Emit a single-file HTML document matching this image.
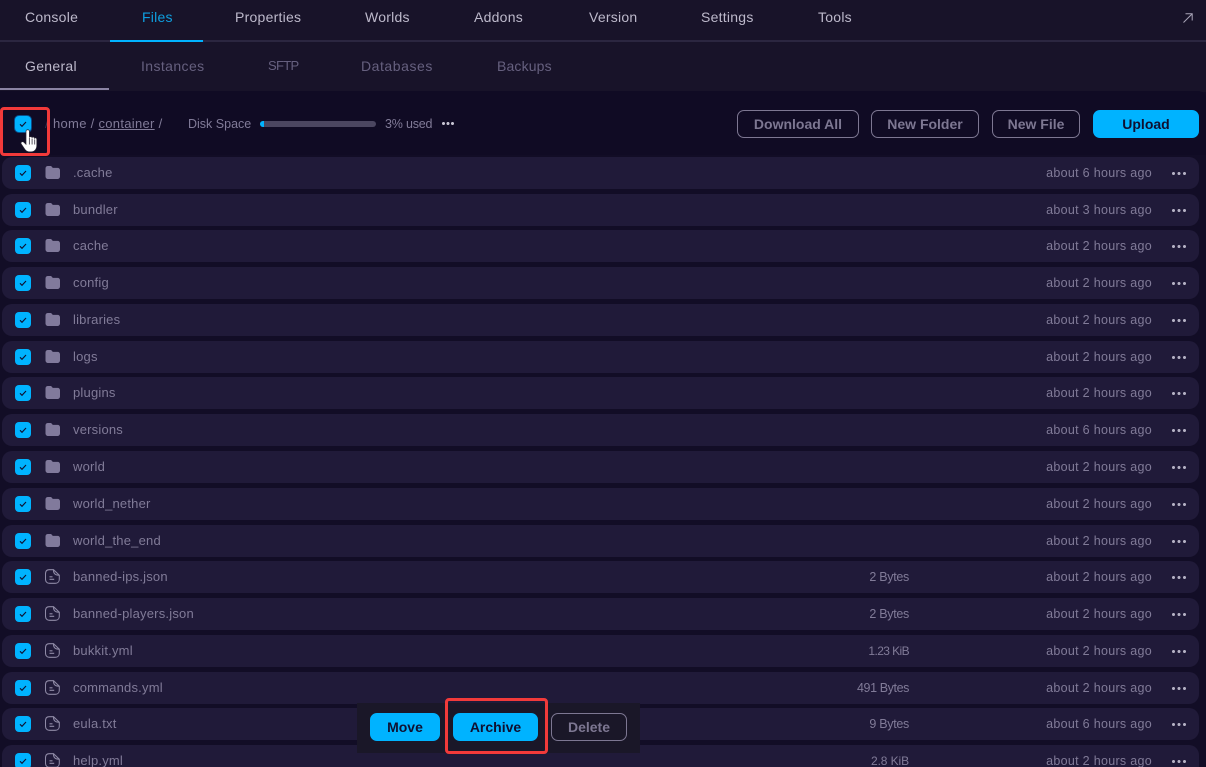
<!DOCTYPE html>
<html><head><meta charset="utf-8"><style>
*{box-sizing:border-box;margin:0;padding:0}
html,body{width:1206px;height:767px;overflow:hidden;background:#120d26}
body{position:relative;font-family:"Liberation Sans",sans-serif;font-size:12px}
.a{position:absolute;white-space:nowrap}
.t{top:0;line-height:35px;font-size:14px;letter-spacing:.25px;color:#bdb9cb}
.s{top:48px;line-height:36px;font-size:14px;letter-spacing:.35px;color:#66607f}
.r{position:absolute;left:2px;width:1197px;height:32px;background:#201a39;border-radius:10px}
.c{position:absolute;left:13px;top:8px;width:16px;height:16px;background:#00b3ff;border-radius:4px}
.c svg{display:block}
.i{position:absolute;left:42.500px;top:8px}
.n{position:absolute;left:71px;top:0;line-height:32px;font-size:13px;letter-spacing:.2px;color:#817b98;white-space:nowrap}
.z{position:absolute;right:290px;top:0;line-height:32px;font-size:12.500px;letter-spacing:-.3px;color:#817b98}
.d{position:absolute;right:47px;top:0;line-height:32px;font-size:12.500px;letter-spacing:.3px;color:#817b98}
.m{position:absolute;left:1170px;top:14.500px;width:14px;height:3px;background:radial-gradient(circle at 1.500px 1.500px,#b5b1c4 1.400px,transparent 1.600px) 0 0/5.500px 3px repeat-x}
.b{position:absolute;height:28px;border-radius:7px;border:1px solid #7d7792;color:#7d7792;font-weight:bold;font-size:14px;line-height:26px;text-align:center;white-space:nowrap}
.p{background:#00b3ff;border-color:#00b3ff;color:#0f1030}
</style></head><body>
<svg width="0" height="0" style="position:absolute"><defs>
<symbol id="k" viewBox="0 0 16 16"><path d="M5 8.300l2 2 4-4.300" fill="none" stroke="#0f1030" stroke-width="1.100"/></symbol>
<symbol id="f" viewBox="0 0 15 15"><path d="M0.500 3.500c0-1.600 1-2.500 2.500-2.500h2.300c.8 0 1.200.3 1.600.8l.8 1.100h4.800c1.500 0 2.500 1 2.500 2.500v5.800c0 1.700-1.100 2.800-2.800 2.800H3.300c-1.700 0-2.800-1.100-2.800-2.800z" fill="#817a9c"/></symbol>
<symbol id="o" viewBox="0 0 15 15"><path d="M4.200.7h4.300l5.800 5.500v4c0 2.500-1.600 4.100-4.100 4.100H4.600c-2.600 0-4.100-1.600-4.100-4.100V4.600C.5 2.200 1.800.7 4.200.7zM8.500.7c-.3 3.700 1.700 5.700 5.800 5.500M4.500 7.800h3M4.500 10.300h4.700" fill="none" stroke="#8f8aa6" stroke-width="1.050"/></symbol>
</defs></svg>

<div class="a" style="left:0;top:0;width:1206px;height:92px;background:#181329"></div>
<div class="a" style="left:0;top:40px;width:1206px;height:2px;background:#2b2640"></div>
<div class="a" style="left:110px;top:40px;width:93px;height:2px;background:#00b3ff"></div>
<div class="a t" style="left:25px">Console</div>
<div class="a t" style="left:142px;color:#0e9fe0">Files</div>
<div class="a t" style="left:235px">Properties</div>
<div class="a t" style="left:365px">Worlds</div>
<div class="a t" style="left:474px">Addons</div>
<div class="a t" style="left:589px">Version</div>
<div class="a t" style="left:701px">Settings</div>
<div class="a t" style="left:818px">Tools</div>
<svg class="a" style="left:1182px;top:12px" width="12" height="12" viewBox="0 0 12 12"><path d="M1.500 10.500L10 2M3.500 1.800h6.700v6.700" fill="none" stroke="#a9a5b8" stroke-width="1"/></svg>

<div class="a s" style="left:25px;color:#bdb9cb;letter-spacing:.3px">General</div>
<div class="a s" style="left:141px;letter-spacing:.4px">Instances</div>
<div class="a s" style="left:268px;font-size:13px;letter-spacing:-.7px">SFTP</div>
<div class="a s" style="left:361px;letter-spacing:.55px">Databases</div>
<div class="a s" style="left:497px;letter-spacing:.15px">Backups</div>
<div class="a" style="left:0;top:88px;width:109px;height:2px;background:#8b84a3"></div>

<div class="a" style="left:0;top:91px;width:1206px;height:64px;background:#100b24;border-radius:0 8px 0 0"></div>
<div class="a" style="left:15px;top:116px;width:16px;height:16px;background:#00b3ff;border-radius:4px;box-shadow:0 0 0 1px #0a4f8c"><svg width="16" height="16" style="display:block"><use href="#k"/></svg></div>
<div class="a" style="left:45px;top:116px;line-height:16px;color:#3c3652;font-size:12px">/</div>
<div class="a" style="left:53px;top:116px;line-height:16px;font-size:13px;letter-spacing:.3px;color:#817b98">home / <span style="text-decoration:underline">container</span> /</div>
<div class="a" style="left:188px;top:116px;line-height:16px;font-size:12.500px;color:#817b98">Disk Space</div>
<div class="a" style="left:260px;top:121px;width:116px;height:6px;border-radius:3px;background:#4b4660"></div>
<div class="a" style="left:260px;top:121px;width:4px;height:6px;border-radius:3px 0 0 3px;background:#00b3ff"></div>
<div class="a" style="left:385px;top:116px;line-height:16px;font-size:12.500px;letter-spacing:-.2px;color:#817b98">3% used</div>
<div class="a" style="left:442px;top:122px;width:13px;height:3px;background:radial-gradient(circle at 1.500px 1.500px,#c6c3d2 1.400px,transparent 1.600px) 0 0/4.500px 3px repeat-x"></div>

<div class="b" style="left:737px;top:110px;width:122px">Download All</div>
<div class="b" style="left:871px;top:110px;width:108px">New Folder</div>
<div class="b" style="left:992px;top:110px;width:88px">New File</div>
<div class="b p" style="left:1093px;top:110px;width:106px">Upload</div>

<div class="r" style="top:157px"><div class="c"><svg width="16" height="16"><use href="#k"/></svg></div><svg class="i" width="15" height="15"><use href="#f"/></svg><div class="n">.cache</div><div class="d">about 6 hours ago</div><div class="m"></div></div>
<div class="r" style="top:194px"><div class="c"><svg width="16" height="16"><use href="#k"/></svg></div><svg class="i" width="15" height="15"><use href="#f"/></svg><div class="n">bundler</div><div class="d">about 3 hours ago</div><div class="m"></div></div>
<div class="r" style="top:230px"><div class="c"><svg width="16" height="16"><use href="#k"/></svg></div><svg class="i" width="15" height="15"><use href="#f"/></svg><div class="n">cache</div><div class="d">about 2 hours ago</div><div class="m"></div></div>
<div class="r" style="top:267px"><div class="c"><svg width="16" height="16"><use href="#k"/></svg></div><svg class="i" width="15" height="15"><use href="#f"/></svg><div class="n">config</div><div class="d">about 2 hours ago</div><div class="m"></div></div>
<div class="r" style="top:304px"><div class="c"><svg width="16" height="16"><use href="#k"/></svg></div><svg class="i" width="15" height="15"><use href="#f"/></svg><div class="n">libraries</div><div class="d">about 2 hours ago</div><div class="m"></div></div>
<div class="r" style="top:341px"><div class="c"><svg width="16" height="16"><use href="#k"/></svg></div><svg class="i" width="15" height="15"><use href="#f"/></svg><div class="n">logs</div><div class="d">about 2 hours ago</div><div class="m"></div></div>
<div class="r" style="top:377px"><div class="c"><svg width="16" height="16"><use href="#k"/></svg></div><svg class="i" width="15" height="15"><use href="#f"/></svg><div class="n">plugins</div><div class="d">about 2 hours ago</div><div class="m"></div></div>
<div class="r" style="top:414px"><div class="c"><svg width="16" height="16"><use href="#k"/></svg></div><svg class="i" width="15" height="15"><use href="#f"/></svg><div class="n">versions</div><div class="d">about 6 hours ago</div><div class="m"></div></div>
<div class="r" style="top:451px"><div class="c"><svg width="16" height="16"><use href="#k"/></svg></div><svg class="i" width="15" height="15"><use href="#f"/></svg><div class="n">world</div><div class="d">about 2 hours ago</div><div class="m"></div></div>
<div class="r" style="top:488px"><div class="c"><svg width="16" height="16"><use href="#k"/></svg></div><svg class="i" width="15" height="15"><use href="#f"/></svg><div class="n">world_nether</div><div class="d">about 2 hours ago</div><div class="m"></div></div>
<div class="r" style="top:525px"><div class="c"><svg width="16" height="16"><use href="#k"/></svg></div><svg class="i" width="15" height="15"><use href="#f"/></svg><div class="n">world_the_end</div><div class="d">about 2 hours ago</div><div class="m"></div></div>
<div class="r" style="top:561px"><div class="c"><svg width="16" height="16"><use href="#k"/></svg></div><svg class="i" width="15" height="15"><use href="#o"/></svg><div class="n">banned-ips.json</div><div class="z">2 Bytes</div><div class="d">about 2 hours ago</div><div class="m"></div></div>
<div class="r" style="top:598px"><div class="c"><svg width="16" height="16"><use href="#k"/></svg></div><svg class="i" width="15" height="15"><use href="#o"/></svg><div class="n">banned-players.json</div><div class="z">2 Bytes</div><div class="d">about 2 hours ago</div><div class="m"></div></div>
<div class="r" style="top:635px"><div class="c"><svg width="16" height="16"><use href="#k"/></svg></div><svg class="i" width="15" height="15"><use href="#o"/></svg><div class="n">bukkit.yml</div><div class="z" style="font-size:12px;letter-spacing:-.6px">1.23 KiB</div><div class="d">about 2 hours ago</div><div class="m"></div></div>
<div class="r" style="top:672px"><div class="c"><svg width="16" height="16"><use href="#k"/></svg></div><svg class="i" width="15" height="15"><use href="#o"/></svg><div class="n">commands.yml</div><div class="z" style="letter-spacing:-.4px">491 Bytes</div><div class="d">about 2 hours ago</div><div class="m"></div></div>
<div class="r" style="top:708px"><div class="c"><svg width="16" height="16"><use href="#k"/></svg></div><svg class="i" width="15" height="15"><use href="#o"/></svg><div class="n">eula.txt</div><div class="z">9 Bytes</div><div class="d">about 6 hours ago</div><div class="m"></div></div>
<div class="r" style="top:745px"><div class="c"><svg width="16" height="16"><use href="#k"/></svg></div><svg class="i" width="15" height="15"><use href="#o"/></svg><div class="n">help.yml</div><div class="z" style="font-size:12px;letter-spacing:-.1px">2.8 KiB</div><div class="d">about 2 hours ago</div><div class="m"></div></div>

<div class="a" style="left:357px;top:703px;width:283px;height:50px;background:#1a1728"></div>
<div class="b p" style="left:370px;top:713px;width:70px">Move</div>
<div class="b p" style="left:453px;top:713px;width:85px">Archive</div>
<div class="b" style="left:551px;top:713px;width:76px">Delete</div>
<div class="a" style="left:445px;top:698px;width:103px;height:56px;border:3px solid #f23a3a;border-radius:4px"></div>

<div class="a" style="left:0;top:107px;width:50px;height:49px;border:3px solid #f23a3a;border-radius:4px"></div>
<svg class="a" style="left:20px;top:129px" width="18" height="24" viewBox="0 0 18 24"><path d="M6 2.200c0-1.900 3.400-1.900 3.400 0v6.300c.2-1.200 2.500-1.200 2.700.2.300-1 2.300-.9 2.500.5.300-.7 2.200-.5 2.200 1v6.300c0 3.800-2.400 6.300-5.700 6.300H9.500c-2.200 0-3.500-.8-4.600-2.400L1.200 15c-1-1.700 1.200-3.100 2.700-1.700L6 15.300z" fill="#fff" stroke="#2a2533" stroke-width=".7"/><path d="M9.400 9v6.500M12.100 9.500v6M14.700 10.500v5" stroke="#4a4552" stroke-width=".9" fill="none"/></svg>
</body></html>
